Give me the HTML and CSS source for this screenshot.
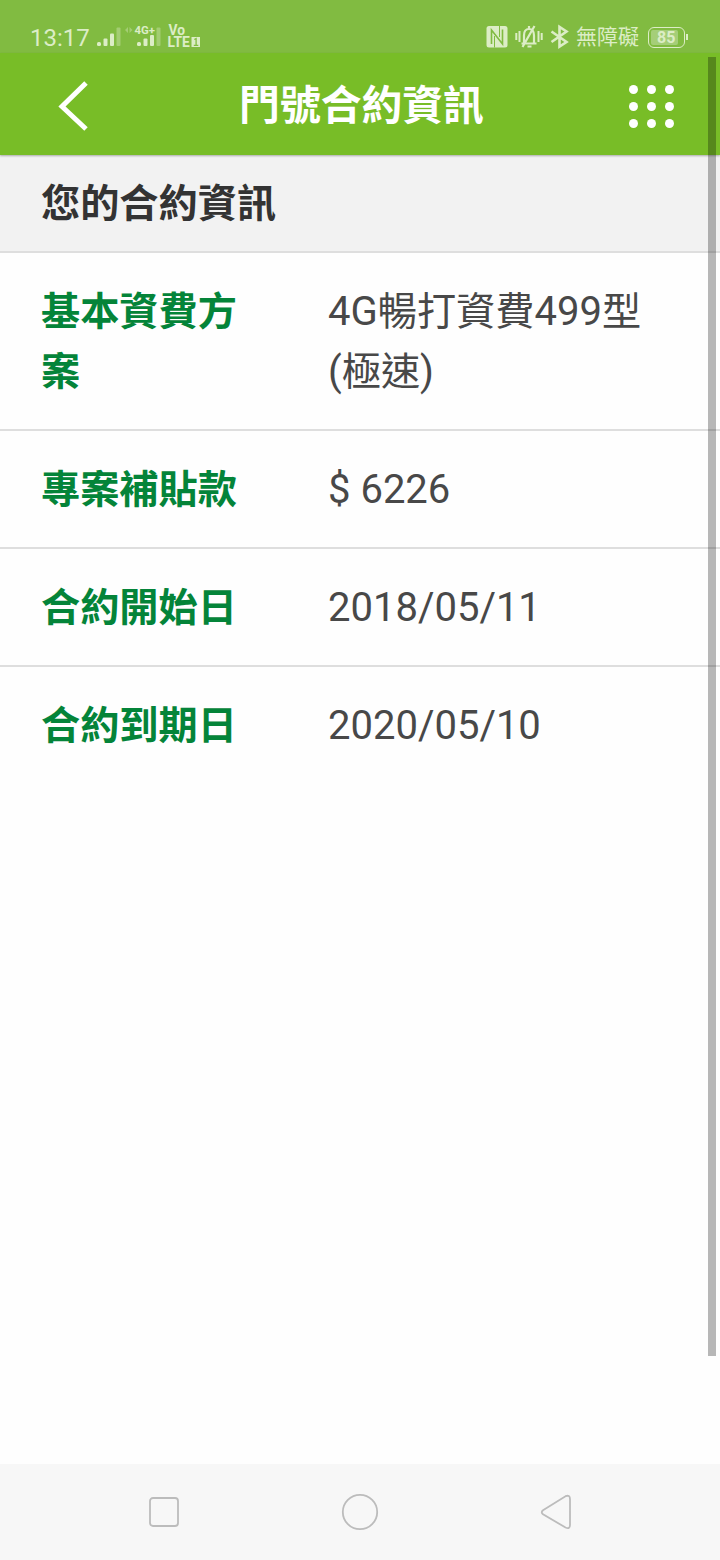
FILE: index.html
```html
<!DOCTYPE html>
<html lang="zh-Hant">
  <head>
    <meta charset="UTF-8" />
    <meta name="viewport" content="width=device-width, initial-scale=1.0" />
    <title>門號合約資訊</title>
    <link rel="stylesheet" href="styles.css">
  </head>
  <body>
    <div class="status-bar">
      <div class="status-left">
        <span class="time">13:17</span>
        <svg class="signal" width="106" height="28" viewBox="0 0 106 28">
          <g fill="#dcedc6">
            <rect x="1" y="19" width="4" height="4" rx="1.5" />
            <rect x="7.5" y="15.5" width="4" height="7.5" rx="1" />
            <rect x="14" y="10.5" width="4" height="12.5" rx="1" />
            <rect x="41" y="19" width="4" height="4" rx="1.5" />
            <rect x="47.5" y="15.5" width="4" height="7.5" rx="1" />
            <rect x="54" y="12" width="4" height="11" rx="1" />
            <rect x="95.5" y="14" width="8.5" height="10" />
          </g>
          <g fill="#a3cd73">
            <rect x="20.5" y="4.5" width="4" height="18.5" rx="1" />
            <rect x="60.5" y="4.5" width="4" height="18.5" rx="1" />
            <path d="M29 7l3-3v6zM33.5 4l3 3-3 3z" />
          </g>
          <path d="M98.3 16.5l1.8-1v7M97.8 22.3h4.5" fill="none" stroke="#81bb41" stroke-width="1.3" />
          <g class="signal-text">
            <text x="38.5" y="11" font-size="10.5" textLength="20.5" lengthAdjust="spacingAndGlyphs">4G+</text>
            <text font-size="13.8"><tspan x="72.5" y="12">Vo</tspan><tspan x="71.5" y="24">LTE</tspan></text>
          </g>
        </svg>
      </div>
      <div class="status-right">
        <svg width="90" height="26" viewBox="0 0 90 26">
          <!-- nfc -->
          <rect x="0.5" y="2" width="21" height="21.5" rx="2.5" fill="#dcedc6" />
          <path d="M5.5 20V6L16.5 20V5.5" fill="none" stroke="#81bb41" stroke-width="1.6" />
          <path d="M8.5 23.5V12M13.5 2V13" fill="none" stroke="#81bb41" stroke-width="1" />
          <!-- silent -->
          <g fill="none" stroke="#dcedc6" stroke-width="2.2">
            <path d="M30.3 9v7M33.5 7v11M52.5 7v11M55.7 9v7" stroke-width="2" />
            <path d="M35.5 19.5h15M38 19.5v-8q0-6.5 5-6.5t5 6.5v8M43 5V2M41.5 22.5h4M36.5 23L48.5 2" />
          </g>
          <!-- bluetooth -->
          <path d="M65.5 7.5L80.5 18L73.5 22.5V3L80.5 7.5L65.5 18" fill="none" stroke="#dcedc6" stroke-width="2.6" />
        </svg>
        <span class="carrier">無障礙</span>
        <span class="battery"><span class="battery-level">85</span></span>
      </div>
    </div>

    <header class="header">
      <svg width="32" height="50" viewBox="0 0 32 50">
        <path d="M29 2L5 25.5L29 48" fill="none" stroke="#fff" stroke-width="5" />
      </svg>
      <h1>門號合約資訊</h1>
      <div class="menu">
        <i></i><i></i><i></i>
        <i></i><i></i><i></i>
        <i></i><i></i><i></i>
      </div>
    </header>

    <main class="content">
      <h2>您的合約資訊</h2>
      <dl>
        <div class="row">
          <dt>基本資費方案</dt>
          <dd>4G<span class="zh">暢打資費</span>499<span class="zh">型</span>(<span class="zh">極速</span>)</dd>
        </div>
        <div class="row">
          <dt>專案補貼款</dt>
          <dd>$ 6226</dd>
        </div>
        <div class="row">
          <dt>合約開始日</dt>
          <dd>2018/05/11</dd>
        </div>
        <div class="row">
          <dt>合約到期日</dt>
          <dd>2020/05/10</dd>
        </div>
      </dl>
    </main>

    <nav class="nav-bar">
      <svg width="32" height="32" viewBox="0 0 32 32">
        <rect x="2" y="2" width="28" height="28" rx="3" />
      </svg>
      <svg width="38" height="38" viewBox="0 0 38 38">
        <circle cx="19" cy="19" r="17.2" />
      </svg>
      <svg width="32" height="38" viewBox="0 0 32 38">
        <path d="M3 17.2L25.5 3.2Q30 1.5 30 6V32Q30 36.5 25.5 34.5L3 21.2Q0.5 19.2 3 17.2Z" />
      </svg>
    </nav>

    <div class="scrollbar"></div>
  </body>
</html>
```

FILE: styles.css
```css
* {
  box-sizing: border-box;
}
body {
  display: flex;
  flex-direction: column;
  height: 1560px;
  margin: 0;
  background-color: #fefefe;
  color: #484848;
  font-family: Roboto, "Noto Sans CJK TC", sans-serif;
}
svg {
  display: block;
}
.status-bar {
  display: flex;
  justify-content: space-between;
  height: 53px;
  padding: 0 35px 0 30px;
  background-color: #81bb41;
  color: #dcedc6;
}
.status-left,
.status-right {
  display: flex;
  align-items: center;
  height: 74px;
}
.time {
  width: 66px;
  padding-top: 1px;
  font-size: 24px;
}
.signal-text {
  fill: #dcedc6;
  font-family: Roboto, sans-serif;
  font-weight: bold;
}
.carrier {
  margin-right: 9px;
  padding-bottom: 4px;
  font-size: 21px;
}
.battery {
  position: relative;
  width: 37px;
  height: 21px;
  padding: 2px;
  border: 1.5px solid #dcedc6;
  border-radius: 6px;
}
.battery::after {
  content: "";
  position: absolute;
  top: 6px;
  right: -4px;
  width: 2px;
  height: 6px;
  background-color: #dcedc6;
}
.battery-level {
  display: block;
  width: 27px;
  height: 15px;
  padding-left: 6px;
  border-radius: 2px;
  background-color: #a5ce78;
  font-size: 16px;
  font-weight: bold;
  line-height: 16px;
}
.header {
  display: flex;
  align-items: center;
  justify-content: space-between;
  height: 102px;
  padding: 4px 46px 0 57px;
  background-color: #78bd27;
  color: #fff;
  box-shadow: 0 1px 2px rgba(0, 0, 0, 0.3);
  z-index: 1;
}
h1 {
  margin: 0 0 1px 5px;
  font-size: 40.8px;
  font-weight: bold;
  line-height: 60px;
}
.menu {
  display: grid;
  grid-template-columns: repeat(3, 9px);
  gap: 8px 9px;
}
.menu i {
  height: 9px;
  border-radius: 50%;
  background-color: #fff;
}
.content {
  flex: 1;
}
h2 {
  height: 98px;
  margin: 0;
  padding: 19px 41px;
  border-bottom: 2px solid #dedede;
  background-color: #f2f2f2;
  color: #333;
  font-size: 39.2px;
  line-height: 60px;
}
dl {
  margin: 0;
}
.row {
  display: flex;
  padding: 29px 42px 27px 41px;
  border-bottom: 2px solid #dedede;
  font-size: 40px;
  line-height: 60px;
}
.row:last-child {
  border-bottom: none;
}
dt {
  width: 287px;
  padding-right: 80px;
  color: #048439;
  font-size: 39.2px;
  font-weight: bold;
}
dd {
  flex: 1;
  margin: 0;
}
.zh {
  font-size: 39.2px;
}
.nav-bar {
  display: flex;
  align-items: center;
  justify-content: space-between;
  height: 96px;
  padding: 0 148px;
  background-color: #f7f7f7;
}
.nav-bar svg {
  fill: none;
  stroke: #bcbcbc;
  stroke-width: 1.8;
}
.scrollbar {
  position: absolute;
  top: 57px;
  right: 4px;
  width: 8px;
  height: 1299px;
  background-color: rgba(0, 0, 0, 0.28);
  z-index: 2;
}
```
